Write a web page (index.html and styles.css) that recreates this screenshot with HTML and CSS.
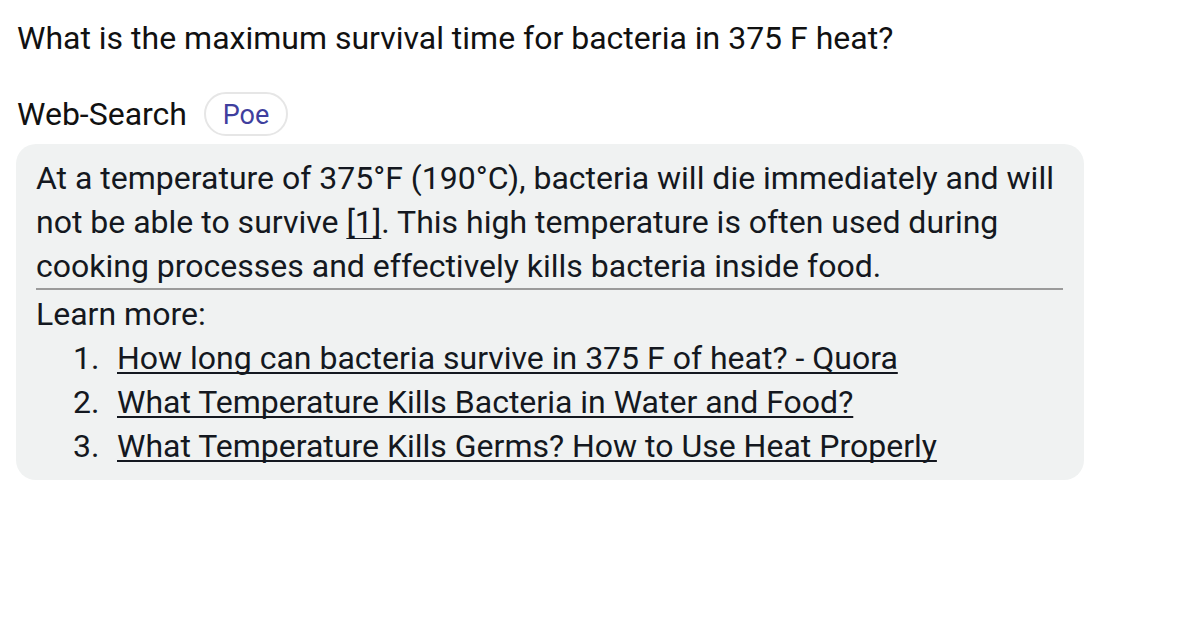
FILE: index.html
```html
<!DOCTYPE html>
<html>
<head>
<meta charset="utf-8">
<link rel="stylesheet" href="styles.css">
</head>
<body>
<div class="page">
  <div class="question">What is the maximum survival time for bacteria in 375 F heat?</div>
  <div class="bot-row">
    <span class="bot-name">Web-Search</span>
    <span class="pill">Poe</span>
  </div>
  <div class="bubble">
    <p class="answer">At a temperature of 375°F (190°C), bacteria will die immediately and will not be able to survive <a class="cite" href="#">[1]</a>. This high temperature is often used during cooking processes and effectively kills bacteria inside food.</p>
    <hr class="divider">
    <div class="learn">Learn more:</div>
    <ol class="links">
      <li><a href="#">How long can bacteria survive in 375 F of heat? - Quora</a></li>
      <li><a href="#">What Temperature Kills Bacteria in Water and Food?</a></li>
      <li><a href="#">What Temperature Kills Germs? How to Use Heat Properly</a></li>
    </ol>
  </div>
</div>
</body>
</html>
```

FILE: styles.css
```css
html, body {
  margin: 0;
  padding: 0;
  background: #ffffff;
}
body {
  font-family: Roboto, "Liberation Sans", sans-serif;
  font-size: 32px;
  line-height: 44px;
  color: #111111;
}
.page {
  padding: 16px 16px;
  width: 1068px;
}
.question {
  padding-left: 1px;
}
.bot-row {
  display: flex;
  align-items: center;
  gap: 17px;
  margin-top: 32px;
  padding-left: 1px;
}
.pill {
  box-sizing: border-box;
  height: 44px;
  width: 84px;
  border: 2px solid #e6e6e6;
  border-radius: 22px;
  display: flex;
  align-items: center;
  justify-content: center;
  color: #3f3f9e;
  font-size: 27px;
  padding-top: 2px;
}
.bubble {
  margin-top: 8px;
  background: #f0f2f2;
  border-radius: 20px;
  padding: 12px 21px 12px 20px;
  color: #141820;
}
.answer {
  margin: 0;
}
.bubble a {
  color: #141820;
  text-decoration: underline;
  text-decoration-thickness: 2px;
  text-underline-offset: 3px;
  text-decoration-skip-ink: none;
}
.bubble a.cite {
  text-decoration-thickness: 1px;
  text-underline-offset: 5px;
}
.divider {
  margin: 0;
  border: 0;
  border-top: 2px solid #9b9b9b;
  height: 2px;
  box-sizing: border-box;
}
.learn {
  margin-top: 2px;
}
.links {
  margin: 0;
  padding-left: 37px;
  list-style: none;
  counter-reset: item;
}
.links li {
  counter-increment: item;
}
.links li::before {
  content: counter(item) ".";
  display: inline-block;
  width: 44px;
}
```
